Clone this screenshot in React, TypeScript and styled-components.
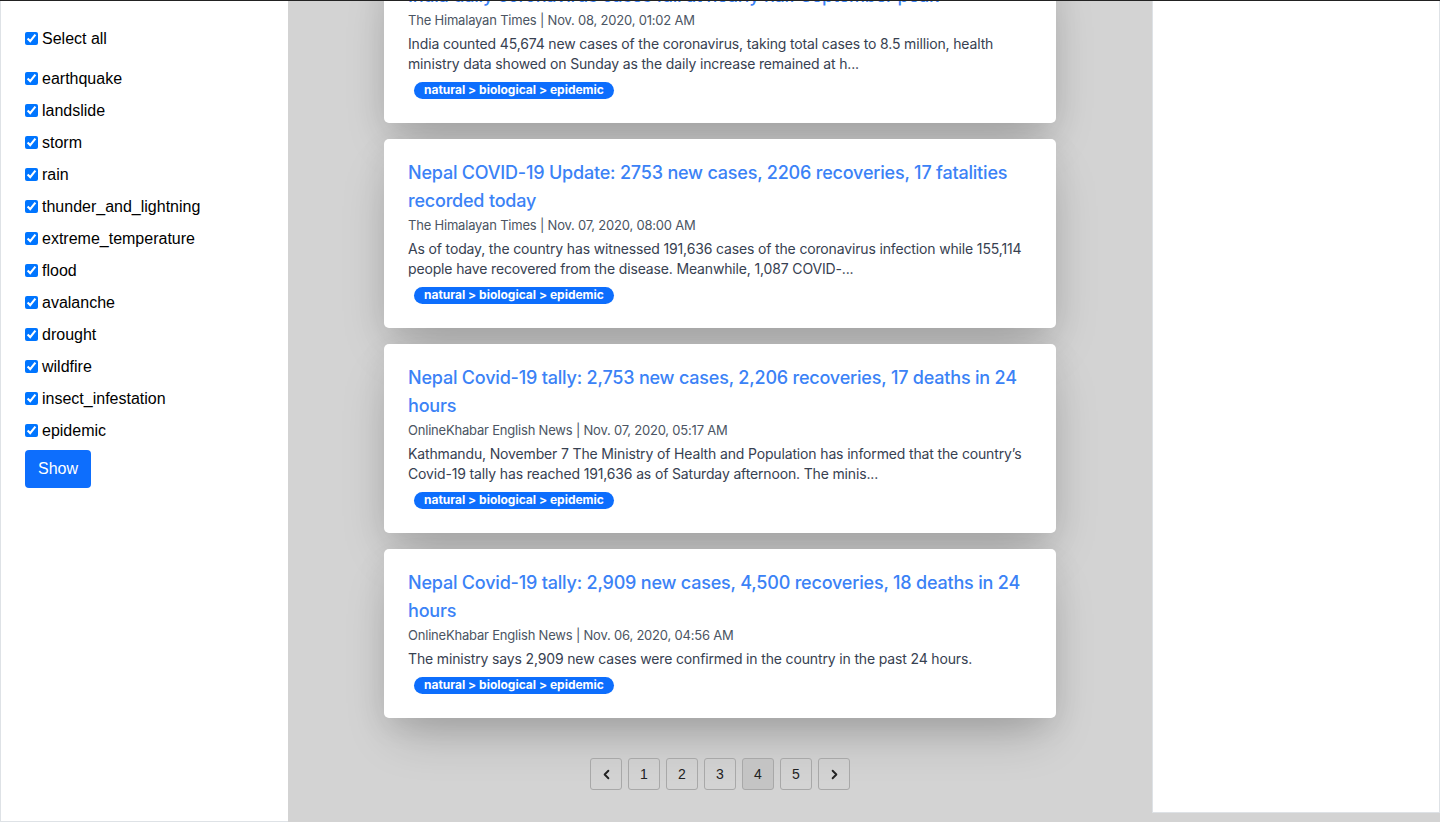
import React from "react";
import styled, { createGlobalStyle } from "styled-components";
import { ChevronLeft, ChevronRight } from "lucide-react";

const Global = createGlobalStyle`
  html, body { margin: 0; padding: 0; height: 100%; }
  body { background: #d3d3d3; overflow: hidden; }
  * { box-sizing: border-box; }
`;

const Page = styled.div`
  height: 822px;
  border-top: 1px solid #222;
  display: grid;
  grid-template-columns: 288px 1fr 288px;
  align-items: start;
  overflow: hidden;
`;

const Sidebar = styled.aside`
  height: 821px;
  background: #fff;
  border-left: 1px solid #dee2e6;
  border-bottom: 1px solid #dee2e6;
  padding: 25px 24px;
  font-family: "Liberation Sans", Arial, sans-serif;
  font-size: 16px;
  color: #000;
  display: flex;
  flex-direction: column;
  gap: 8px;
`;

const CheckRow = styled.label<{ $first?: boolean }>`
  display: flex;
  align-items: center;
  height: 24px;
  padding-top: 1px;
  margin-bottom: ${(p) => (p.$first ? "8px" : "0")};
  cursor: pointer;
`;

const Check = styled.input`
  width: 13px;
  height: 13px;
  margin: 0 4px 0 0;
`;

const ShowButton = styled.button`
  align-self: flex-start;
  height: 38px;
  padding: 0 13px;
  background: #0d6efd;
  color: #fff;
  border: none;
  border-radius: 4px;
  font-family: "Liberation Sans", Arial, sans-serif;
  font-size: 16px;
`;

const Main = styled.main`
  height: 821px;
  overflow: hidden;
  display: flex;
  flex-direction: column;
  align-items: center;
  font-family: Inter, "Noto Sans", sans-serif;
`;

const List = styled.div`
  margin-top: -39px;
  width: 672px;
  display: flex;
  flex-direction: column;
  gap: 16px;
`;

const Card = styled.article`
  background: #fff;
  border-radius: 5px;
  padding: 20px 24px 24px;
  box-shadow: 0 25px 50px -12px rgba(0, 0, 0, 0.22), 0 8px 30px rgba(0, 0, 0, 0.08);
`;

const Title = styled.a`
  display: block;
  font-size: 18px;
  line-height: 28px;
  font-weight: 500;
  letter-spacing: -0.2px;
  color: #3b82f6;
  text-decoration: none;
`;

const Meta = styled.div`
  font-size: 13px;
  line-height: 20px;
  letter-spacing: -0.2px;
  color: #4b5563;
`;

const Desc = styled.p`
  margin: 4px 0 0;
  font-size: 14px;
  line-height: 20px;
  letter-spacing: -0.15px;
  color: #374151;
`;

const Tags = styled.div`
  margin-top: 8px;
  display: flex;
`;

const Tag = styled.span`
  margin-left: 6px;
  height: 17px;
  padding: 0 10px;
  border-radius: 9px;
  background: #0d6efd;
  color: #fff;
  font-size: 12px;
  font-weight: 700;
  line-height: 16px;
`;

const Pager = styled.nav`
  margin-top: 40px;
  display: flex;
  gap: 6px;
`;

const PageBtn = styled.button<{ $active?: boolean }>`
  width: 32px;
  height: 32px;
  display: flex;
  align-items: center;
  justify-content: center;
  border: 1px solid #a8a8a8;
  border-radius: 3px;
  background: ${(p) => (p.$active ? "#c4c4c4" : "transparent")};
  color: #222;
  font-family: "Liberation Sans", Arial, sans-serif;
  font-size: 14px;
  padding: 0;
`;

const RightPanel = styled.aside`
  height: 812px;
  background: #fff;
  border-left: 1px solid #dee2e6;
  border-right: 1px solid #dee2e6;
  border-bottom: 1px solid #dee2e6;
`;

const categories = [
  "earthquake",
  "landslide",
  "storm",
  "rain",
  "thunder_and_lightning",
  "extreme_temperature",
  "flood",
  "avalanche",
  "drought",
  "wildfire",
  "insect_infestation",
  "epidemic",
];

const articles = [
  {
    title: "India daily coronavirus cases fall at nearly half September peak",
    meta: "The Himalayan Times | Nov. 08, 2020, 01:02 AM",
    desc: "India counted 45,674 new cases of the coronavirus, taking total cases to 8.5 million, health ministry data showed on Sunday as the daily increase remained at h...",
  },
  {
    title: "Nepal COVID-19 Update: 2753 new cases, 2206 recoveries, 17 fatalities recorded today",
    meta: "The Himalayan Times | Nov. 07, 2020, 08:00 AM",
    desc: "As of today, the country has witnessed 191,636 cases of the coronavirus infection while 155,114 people have recovered from the disease. Meanwhile, 1,087 COVID-...",
  },
  {
    title: "Nepal Covid-19 tally: 2,753 new cases, 2,206 recoveries, 17 deaths in 24 hours",
    meta: "OnlineKhabar English News | Nov. 07, 2020, 05:17 AM",
    desc: "Kathmandu, November 7 The Ministry of Health and Population has informed that the country\u2019s Covid-19 tally has reached 191,636 as of Saturday afternoon. The minis...",
  },
  {
    title: "Nepal Covid-19 tally: 2,909 new cases, 4,500 recoveries, 18 deaths in 24 hours",
    meta: "OnlineKhabar English News | Nov. 06, 2020, 04:56 AM",
    desc: "The ministry says 2,909 new cases were confirmed in the country in the past 24 hours.",
  },
];

export default function App() {
  return (
    <>
      <Global />
      <Page>
        <Sidebar>
          <CheckRow $first>
            <Check type="checkbox" defaultChecked />
            Select all
          </CheckRow>
          {categories.map((c) => (
            <CheckRow key={c}>
              <Check type="checkbox" defaultChecked />
              {c}
            </CheckRow>
          ))}
          <ShowButton>Show</ShowButton>
        </Sidebar>
        <Main>
          <List>
            {articles.map((a) => (
              <Card key={a.meta}>
                <Title href="#">{a.title}</Title>
                <Meta>{a.meta}</Meta>
                <Desc>{a.desc}</Desc>
                <Tags>
                  <Tag>natural &gt; biological &gt; epidemic</Tag>
                </Tags>
              </Card>
            ))}
          </List>
          <Pager>
            <PageBtn>
              <ChevronLeft size={15} strokeWidth={3} />
            </PageBtn>
            {[1, 2, 3, 4, 5].map((n) => (
              <PageBtn key={n} $active={n === 4}>
                {n}
              </PageBtn>
            ))}
            <PageBtn>
              <ChevronRight size={15} strokeWidth={3} />
            </PageBtn>
          </Pager>
        </Main>
        <RightPanel />
      </Page>
    </>
  );
}
